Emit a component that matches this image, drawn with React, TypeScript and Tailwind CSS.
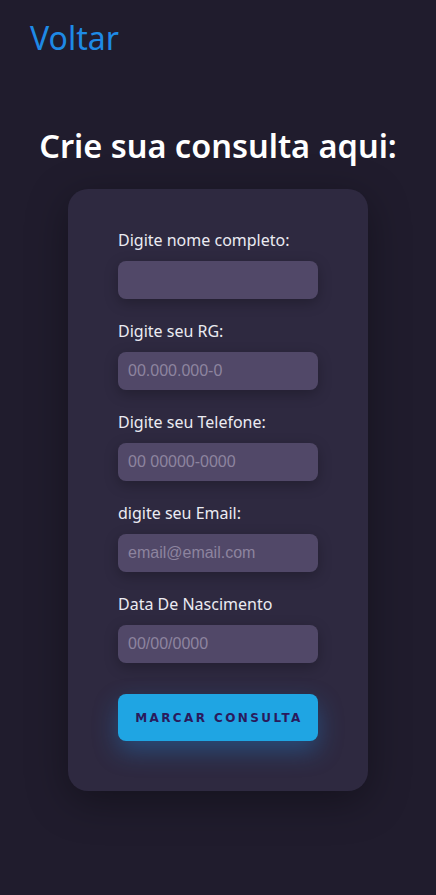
const fields = [
  { label: 'Digite nome completo:', placeholder: '' },
  { label: 'Digite seu RG:', placeholder: '00.000.000-0' },
  { label: 'Digite seu Telefone:', placeholder: '00 00000-0000' },
  { label: 'digite seu Email:', placeholder: 'email@email.com' },
  { label: 'Data De Nascimento', placeholder: '00/00/0000' },
];

export default function App() {
  return (
    <div className="min-h-[895px] bg-[#201c2d] font-['Noto_Sans',sans-serif] text-white">
      <div className="px-[30px] pt-[17px]">
        <a className="text-[32px] leading-[42px] text-[#1e8ae6]">Voltar</a>
      </div>

      <h1 className="mt-[67px] text-center text-[32.5px] font-semibold leading-[40px] text-white">
        Crie sua consulta aqui:
      </h1>

      <div className="mx-auto mt-[23px] flex w-[300px] flex-col rounded-[20px] bg-[#2e2940] px-[50px] pb-[50px] pt-[40px] shadow-[0_10px_40px_rgba(0,0,0,0.35)]">
        {fields.map((f, i) => (
          <div key={i} className={i > 0 ? 'mt-[21px]' : ''}>
            <label className="block text-[16px] leading-[22px] text-[#ebebf2]">{f.label}</label>
            <input
              placeholder={f.placeholder}
              className="mt-[10px] h-[38px] w-[200px] rounded-[8px] bg-[#514868] px-[10px] font-['Liberation_Sans',sans-serif] text-[16px] text-white shadow-[0_4px_14px_rgba(0,0,0,0.25)] outline-none placeholder:text-[#8d849f]"
            />
          </div>
        ))}

        <button className="mt-[31px] h-[47px] w-[200px] rounded-[8px] bg-[#1fa5e3] pl-[2px] font-['DejaVu_Sans',sans-serif] text-[12px] font-bold tracking-[0.2em] text-[#2a1a5c] shadow-[0_10px_25px_rgba(31,140,230,0.35)]">
          MARCAR CONSULTA
        </button>
      </div>
    </div>
  );
}
